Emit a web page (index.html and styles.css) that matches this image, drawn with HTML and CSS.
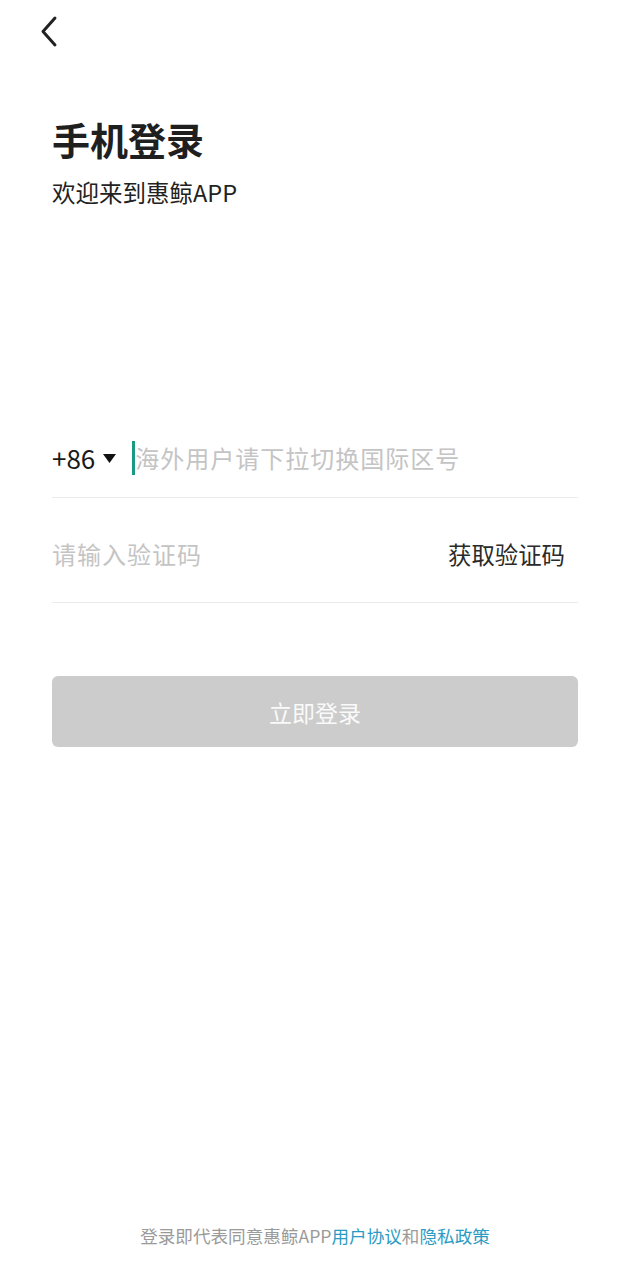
FILE: index.html
```html
<!DOCTYPE html>
<html lang="zh-CN">
<head>
<meta charset="utf-8">
<title>手机登录</title>
<link rel="stylesheet" href="styles.css">
</head>
<body>
<div class="page">
  <div class="topbar">
    <svg class="back" width="24" height="36" viewBox="0 0 24 36">
      <path d="M17 4 L5 17.5 L17 31" fill="none" stroke="#222" stroke-width="3" stroke-linecap="round" stroke-linejoin="round"/>
    </svg>
  </div>
  <h1 class="title">手机登录</h1>
  <p class="subtitle">欢迎来到惠鲸APP</p>

  <div class="form">
    <div class="row phone-row">
      <span class="code">+86</span>
      <svg class="caret" width="13" height="9" viewBox="0 0 13 9"><path d="M0 0 H13 L6.5 9 Z" fill="#111"/></svg>
      <span class="cursor"></span>
      <span class="placeholder ph-phone">海外用户请下拉切换国际区号</span>
    </div>
    <div class="row code-row">
      <span class="placeholder">请输入验证码</span>
      <span class="get-code">获取验证码</span>
    </div>
    <div class="btn">立即登录</div>
  </div>

  <div class="footer">登录即代表同意惠鲸APP<span class="link">用户协议</span>和<span class="link">隐私政策</span></div>
</div>
</body>
</html>
```
FILE: styles.css
```css
html, body {
  margin: 0;
  padding: 0;
  background: #ffffff;
}
body {
  font-family: "Noto Sans CJK SC", "Noto Sans", sans-serif;
  color: #222;
}
.page {
  width: 630px;
  min-height: 1280px;
  display: flex;
  flex-direction: column;
  box-sizing: border-box;
  padding: 0 52px;
}
.topbar {
  height: 64px;
  display: flex;
  align-items: flex-start;
  padding-top: 14px;
  margin-left: -14px;
  box-sizing: border-box;
}
.back {
  display: block;
}
.title {
  margin: 53px 0 0;
  font-size: 38px;
  line-height: 44px;
  font-weight: 700;
  color: #1f1f1f;
}
.subtitle {
  margin: 16px 0 0;
  font-size: 23.5px;
  line-height: 30px;
  color: #222;
}
.form {
  margin-top: 212px;
  display: flex;
  flex-direction: column;
}
.row {
  display: flex;
  align-items: center;
  border-bottom: 1px solid #ececec;
}
.phone-row {
  height: 78px;
}
.code-row {
  height: 105px;
  padding-top: 8px;
  box-sizing: border-box;
  justify-content: space-between;
}
.code {
  font-size: 26px;
  color: #1a1a1a;
  line-height: 30px;
}
.caret {
  margin-left: 8px;
  display: block;
}
.cursor {
  width: 3px;
  height: 34px;
  background: #1a9a82;
  margin-left: 16px;
}
.placeholder {
  font-size: 24px;
  line-height: 30px;
  color: #c4c4c4;
  letter-spacing: 1px;
}
.get-code {
  font-size: 23.4px;
  line-height: 30px;
  color: #2a2a2a;
  margin-right: 13px;
}
.btn {
  margin-top: 73px;
  height: 71px;
  border-radius: 6px;
  background: #cccccc;
  color: #fafafa;
  font-size: 23px;
  display: flex;
  align-items: center;
  justify-content: center;
}
.footer {
  margin-top: auto;
  padding-bottom: 32px;
  text-align: center;
  font-size: 17.6px;
  line-height: 24px;
  color: #9a9a9a;
}
.link {
  color: #2a9cc4;
}
```
